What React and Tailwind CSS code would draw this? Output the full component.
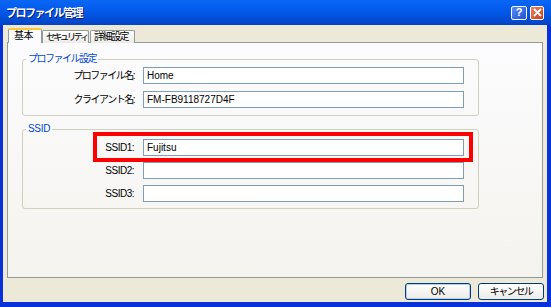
import React from 'react'

const font = { fontFamily: '"Liberation Sans", "Noto Sans CJK JP", sans-serif' }

function Field({ label, value, jp }) {
  return (
    <div className="flex items-center h-[17px]">
      <div className={`w-[111px] text-right text-[10px] leading-[13px] text-black whitespace-nowrap ${jp ? 'tracking-[-1.5px]' : 'tracking-[-0.5px]'}`}>{label}</div>
      <div className="ml-[9px] w-[321px] h-[17px] border border-[#7F9DB9] bg-white px-[3px] text-[10px] leading-[15px] text-black">
        {value}
      </div>
    </div>
  )
}

function Group({ title, children, className, jp }) {
  return (
    <fieldset className={`ml-[14px] w-[457px] border border-[#D0D0BF] rounded-[3px] ${className}`}>
      <legend className={`ml-[3px] px-[2px] text-[10px] leading-[12px] text-[#0046D5] whitespace-nowrap ${jp ? 'tracking-[-1.5px]' : 'tracking-[-0.3px]'}`}>{title}</legend>
      {children}
    </fieldset>
  )
}

export default function App() {
  return (
    <div className="w-[551px] h-[307px] bg-[#0831D9] flex flex-col overflow-hidden" style={font}>
      {/* タイトルバー */}
      <div className="h-[25px] flex items-center justify-between px-[6px] bg-gradient-to-b from-[#0A67F5] via-[#0357E8] to-[#0443C4]">
        <span className="text-white font-bold text-[11px] leading-[14px] tracking-[-1.5px] whitespace-nowrap [text-shadow:1px_1px_0_#0A1E7A]">プロファイル管理</span>
        <div className="flex items-center gap-[3px] mr-[1px]">
          <div className="w-[16px] h-[14px] rounded-[2px] border border-white bg-gradient-to-br from-[#5B8CF5] to-[#1C50D8] flex items-center justify-center">
            <span className="text-white font-bold text-[11px] leading-[11px]">?</span>
          </div>
          <div className="w-[14px] h-[14px] rounded-[2px] border border-white bg-gradient-to-br from-[#E78462] to-[#C63A10] flex items-center justify-center">
            <svg width="9" height="9" viewBox="0 0 9 9">
              <path d="M1 1 L8 8 M8 1 L1 8" stroke="white" strokeWidth="1.8" />
            </svg>
          </div>
        </div>
      </div>

      {/* 本体 */}
      <div className="flex-1 ml-[3px] mr-[4px] mb-[5px] bg-[#ECE9D8] flex flex-col pl-[4px] pr-[4px] pt-[3px]">
        {/* タブ */}
        <div className="flex items-end h-[15px] ml-[1px] relative z-10">
          <div className="h-[15px] w-[34px] bg-[#FCFCFE] border-x border-[#919B9C] border-t-[2px] border-t-[#FFC83C] rounded-t-[2px] text-[10px] leading-[12px] pl-[5px] text-black whitespace-nowrap tracking-[-0.5px]">基本</div>
          <div className="h-[13px] w-[47px] bg-gradient-to-b from-white to-[#ECEBE6] border border-b-0 border-[#919B9C] rounded-t-[2px] text-[9.5px] leading-[12px] pl-[3px] text-black tracking-[-2.6px] whitespace-nowrap overflow-hidden">セキュリティ</div>
          <div className="h-[13px] w-[45px] ml-[1px] bg-gradient-to-b from-white to-[#ECEBE6] border border-b-0 border-[#919B9C] rounded-t-[2px] text-[10px] leading-[12px] pl-[3px] text-black tracking-[-1.5px] whitespace-nowrap overflow-hidden">詳細設定</div>
        </div>

        {/* パネル */}
        <div className="h-[236px] -mt-[1px] w-[536px] border border-[#919B9C] bg-gradient-to-b from-[#FCFCFE] to-[#F4F3EE] pt-[10px]">
          <Group title="プロファイル設定" jp className="h-[63px]">
            <div className="flex flex-col gap-[7px] pt-[2px]">
              <Field jp label="プロファイル名:" value="Home" />
              <Field jp label="クライアント名:" value="FM-FB9118727D4F" />
            </div>
          </Group>

          <Group title="SSID" className="h-[86px] mt-[7px]">
            <div className="flex flex-col gap-[6px] pt-[4px]">
              <div className="relative">
                <Field label="SSID1:" value="Fujitsu" />
                <div className="absolute left-[70px] top-[-7px] w-[380px] h-[30px] border-[4px] border-[#FF0000]" />
              </div>
              <Field label="SSID2:" value="" />
              <Field label="SSID3:" value="" />
            </div>
          </Group>
        </div>

        {/* ボタン */}
        <div className="flex justify-end gap-[7px] mt-[5px] mr-[-1px]">
          <button className="w-[66px] h-[17px] rounded-[3px] border border-[#003C74] bg-gradient-to-b from-white to-[#ECEBE6] text-[10px] leading-[13px] text-black shadow-[inset_0_0_0_1px_#B4D0F8]">OK</button>
          <button className="w-[66px] h-[17px] rounded-[3px] border border-[#003C74] bg-gradient-to-b from-white to-[#ECEBE6] text-[10px] leading-[13px] text-black tracking-[-1.5px]">キャンセル</button>
        </div>
      </div>
    </div>
  )
}
